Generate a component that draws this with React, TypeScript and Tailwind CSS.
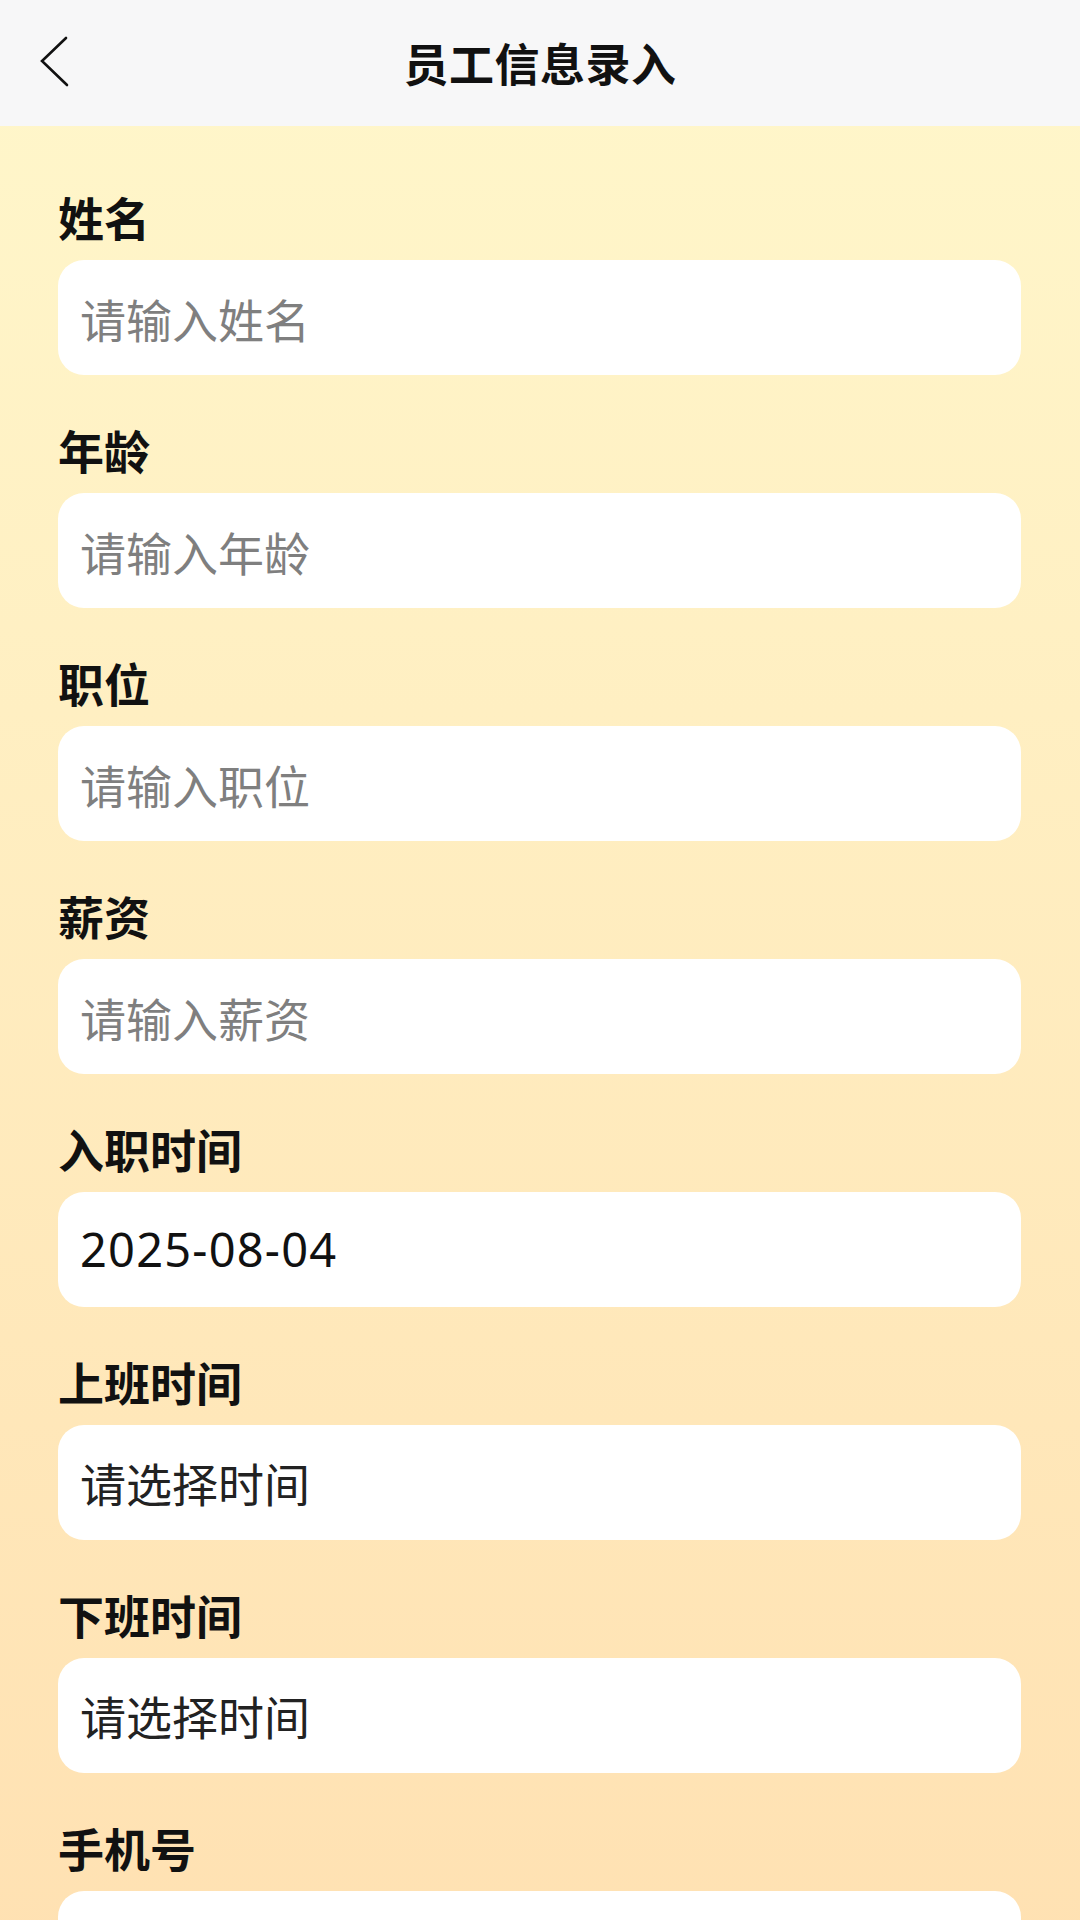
import React from "react";

const fields: { label: string; placeholder?: string; value?: string; picker?: boolean }[] = [
  { label: "姓名", placeholder: "请输入姓名" },
  { label: "年龄", placeholder: "请输入年龄" },
  { label: "职位", placeholder: "请输入职位" },
  { label: "薪资", placeholder: "请输入薪资" },
  { label: "入职时间", value: "2025-08-04" },
  { label: "上班时间", value: "请选择时间", picker: true },
  { label: "下班时间", value: "请选择时间", picker: true },
  { label: "手机号", placeholder: "" },
];

const App: React.FC = () => {
  return (
    <div className="min-h-screen w-[1080px] font-['Noto_Sans_CJK_SC',sans-serif] bg-linear-to-b from-[#fff7cb] to-[#ffe0b1]">
      {/* Header */}
      <div className="h-[126px] bg-[#f7f7f8] grid grid-cols-[1fr_auto_1fr] items-center">
        <div className="flex items-center pl-[36px]">
          <svg width="40" height="56" viewBox="0 0 40 56" fill="none">
            <path
              d="M30 3 L6 26 L31 50"
              stroke="#111"
              strokeWidth="2.6"
              strokeLinecap="round"
              strokeLinejoin="miter"
            />
          </svg>
        </div>
        <h1 className="text-[45px] leading-[60px] font-bold text-[#111] tracking-[0.5px]">
          员工信息录入
        </h1>
        <div />
      </div>

      {/* Form */}
      <div className="pt-[60px] pl-[58px] pr-[59px] flex flex-col">
        {fields.map((f) => (
          <div key={f.label} className="flex flex-col mb-[44px]">
            <label className="text-[46px] leading-[60px] font-bold text-[#111] mb-[14px]">
              {f.label}
            </label>
            {f.placeholder !== undefined ? (
              <input
                placeholder={f.placeholder}
                className="h-[115px] w-full bg-white rounded-[26px] px-[22px] text-[46px] text-[#111] placeholder:text-[#7f7f7f] outline-none"
              />
            ) : (
              <div
                className={`h-[115px] w-full bg-white rounded-[26px] px-[22px] flex items-center ${
                  f.picker
                    ? "text-[46px] text-[#222]"
                    : "text-[#111] font-['Noto_Sans',sans-serif] text-[47px] tracking-[1.2px]"
                }`}
              >
                {f.value}
              </div>
            )}
          </div>
        ))}
      </div>
    </div>
  );
};

export default App;
